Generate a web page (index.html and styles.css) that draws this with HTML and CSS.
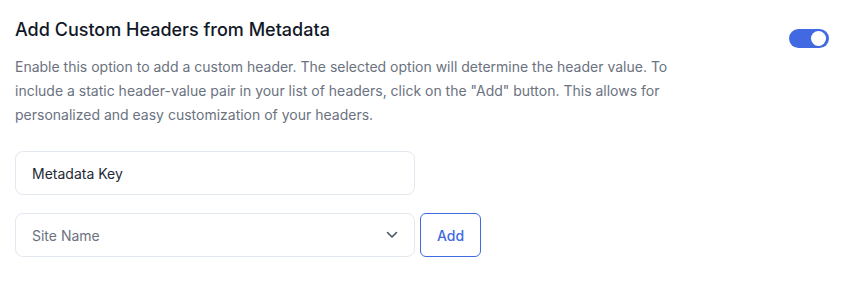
FILE: index.html
```html
<!DOCTYPE html>
<html lang="en">
<head>
<meta charset="utf-8">
<title>Custom Headers</title>
<link rel="stylesheet" href="styles.css">
</head>
<body>
<div class="panel">
  <div class="head">
    <div class="intro">
      <h2 class="title">Add Custom Headers from Metadata</h2>
      <p class="desc">Enable this option to add a custom header. The selected option will determine the header value. To include a static header-value pair in your list of headers, click on the "Add" button. This allows for personalized and easy customization of your headers.</p>
    </div>
    <div class="toggle"><span class="knob"></span></div>
  </div>
  <div class="field">Metadata Key</div>
  <div class="row">
    <div class="field select">
      <span class="placeholder">Site Name</span>
      <svg class="chev" width="12" height="8" viewBox="0 0 12 8"><path d="M1.5 1.5 L6 6 L10.5 1.5" fill="none" stroke="#4b5563" stroke-width="1.6" stroke-linecap="round" stroke-linejoin="round"/></svg>
    </div>
    <button class="add">Add</button>
  </div>
</div>
</body>
</html>
```

FILE: styles.css
```css
* { box-sizing: border-box; }
body {
  margin: 0;
  background: #ffffff;
  font-family: Inter, "Noto Sans", sans-serif;
}
.panel {
  padding: 18px 22px 0 15px;
}
.head {
  display: flex;
  justify-content: space-between;
  align-items: flex-start;
}
.intro { width: 690px; }
.title {
  margin: 0;
  font-size: 18px;
  line-height: 24px;
  font-weight: 500;
  color: #111827;
}
.desc {
  margin: 13px 0 0;
  font-size: 14px;
  line-height: 24px;
  color: #6b7280;
}
.toggle {
  margin-top: 11px;
  width: 40px;
  height: 19px;
  border-radius: 10px;
  background: #4169e1;
  display: flex;
  align-items: center;
  justify-content: flex-end;
  padding-right: 3px;
}
.knob {
  width: 15px;
  height: 15px;
  border-radius: 50%;
  background: #ffffff;
}
.field {
  margin-top: 24px;
  width: 400px;
  height: 44px;
  border: 1px solid #e2e8f0;
  border-radius: 8px;
  padding: 0 16px;
  display: flex;
  align-items: center;
  font-size: 14px;
  color: #1f2937;
}
.row {
  display: flex;
  gap: 5px;
  margin-top: 18px;
}
.row .field { margin-top: 0; }
.select { justify-content: space-between; padding-right: 16px; }
.placeholder { color: #6b7280; }
.chev { display: block; }
.add {
  width: 61px;
  height: 44px;
  border: 1px solid #4169e1;
  border-radius: 6px;
  background: #ffffff;
  color: #4169e1;
  font-family: Inter, "Noto Sans", sans-serif;
  font-size: 14px;
  font-weight: 500;
  padding: 0;
}
```
